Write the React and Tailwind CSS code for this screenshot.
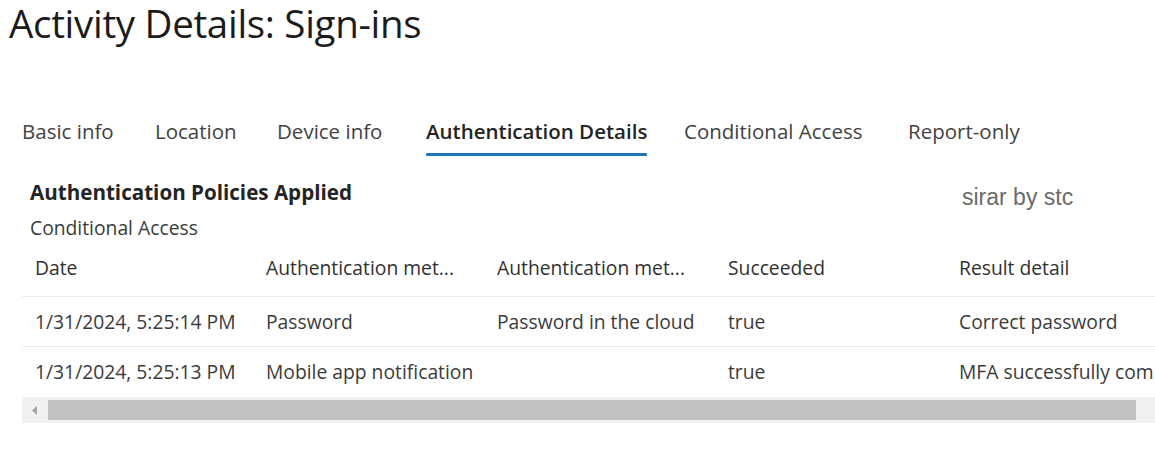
export default function App() {
  const tabs = [
    { label: "Basic info", w: "w-[133px]" },
    { label: "Location", w: "w-[122px]" },
    { label: "Device info", w: "w-[149px]" },
    { label: "Authentication Details", w: "w-[258px]", active: true },
    { label: "Conditional Access", w: "w-[224px]" },
    { label: "Report-only", w: "w-[130px]" },
  ];
  const headers = ["Date", "Authentication met...", "Authentication met...", "Succeeded", "Result detail"];
  const rows = [
    ["1/31/2024, 5:25:14 PM", "Password", "Password in the cloud", "true", "Correct password"],
    ["1/31/2024, 5:25:13 PM", "Mobile app notification", "", "true", "MFA successfully com..."],
  ];
  return (
    <div
      className="relative w-[1155px] h-[450px] overflow-hidden bg-white text-[#323130]"
      style={{ fontFamily: '"Open Sans", "Noto Sans", sans-serif' }}
    >
      <div className="flex items-center h-[46px]">
        <h1 className="pl-[9px] text-[38.5px] leading-[52px] text-[#1b1b1b] tracking-[-0.3px] whitespace-nowrap">
          Activity Details: Sign-ins
        </h1>
      </div>
      <div className="flex pl-[22px] mt-[70px] h-[42px]">
        {tabs.map((t) => (
          <div key={t.label} className={`${t.w} shrink-0 flex flex-col items-start`}>
            <div
              className={`relative whitespace-nowrap text-[20.5px] leading-[30px] ${
                t.active ? "text-[#242424] font-semibold" : "text-[#424242]"
              }`}
            >
              {t.label}
              {t.active && (
                <div className="absolute left-0 right-0 top-[37px] h-[3px] bg-[#1f73b7] rounded-[1px]" />
              )}
            </div>
          </div>
        ))}
      </div>
      <div className="pl-[30px] mt-[21px] text-[20.6px] leading-[26px] font-bold text-[#242424]">
        Authentication Policies Applied
      </div>
      <div className="pl-[30px] mt-[10px] text-[19.3px] leading-[26px] text-[#3b3b3b]">Conditional Access</div>
      <div
        className="absolute left-[962px] top-[183px] text-[23px] leading-[28px] text-[#6b6b6b]"
        style={{ fontFamily: '"Liberation Sans", Arial, sans-serif' }}
      >
        sirar by stc
      </div>
      <div className="ml-[22px] mt-[7px]">
        <div className="flex h-[49px] border-b border-[#ebebeb]">
          {headers.map((h, i) => (
            <div key={i} className="w-[231px] shrink-0 pl-[13px] text-[19.3px] leading-[40px] whitespace-nowrap text-[#323130]">
              {h}
            </div>
          ))}
        </div>
        {rows.map((r, ri) => (
          <div key={ri} className={`flex h-[50px] ${ri === 0 ? "border-b border-[#ebebeb]" : ""}`}>
            {r.map((c, ci) => (
              <div key={ci} className="w-[231px] shrink-0 pl-[13px] text-[19.3px] leading-[50px] whitespace-nowrap overflow-hidden text-[#3b3b3b]">
                {c}
              </div>
            ))}
          </div>
        ))}
        <div className="flex items-center h-[26px] bg-[#f1f1f1]">
          <div className="w-[26px] flex justify-center">
            <svg width="6" height="9" viewBox="0 0 6 9">
              <path d="M5 0 L0 4.5 L5 9 Z" fill="#a3a3a3" />
            </svg>
          </div>
          <div className="w-[1088px] h-[20px] bg-[#c2c2c2]" />
        </div>
      </div>
    </div>
  );
}
